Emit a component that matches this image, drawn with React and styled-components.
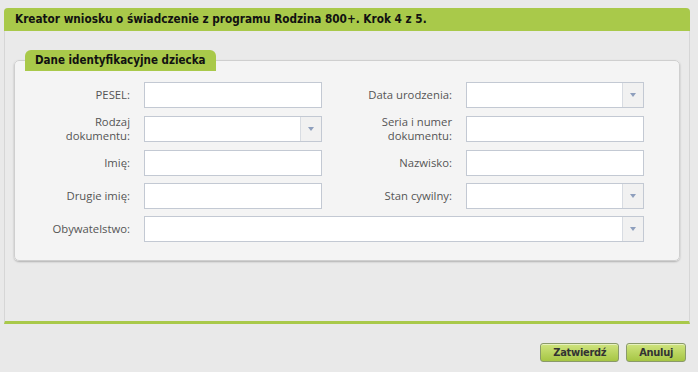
import styled, { createGlobalStyle } from "styled-components";

const Global = createGlobalStyle`
  html, body { margin: 0; padding: 0; background: #e9e9e9; }
  body { font-family: "DejaVu Sans", Verdana, sans-serif; }
`;

const Page = styled.div`
  padding: 8px 8px 0 4px;
  width: 686px;
`;

const Panel = styled.section`
  background: #eaeaea;
  border: 1px solid #d6d6d6;
  border-top: none;
  border-bottom: 3px solid #a9c94a;
  border-radius: 4px 4px 0 0;
  height: 316px;
  box-sizing: border-box;
`;

const PanelHeader = styled.h1`
  margin: 0 -1px;
  height: 23px;
  line-height: 23px;
  background: #a9c94a;
  border-radius: 4px 4px 0 0;
  padding-left: 11px;
  font-family: "DejaVu Sans Condensed", "DejaVu Sans", sans-serif;
  font-size: 11.7px;
  font-weight: bold;
  color: #111;
`;

const Fieldset = styled.fieldset`
  margin: 19px 9px 0 9px;
  padding: 11px 0 18px 0;
  background: #f4f4f4;
  border: 1px solid #cfcfcf;
  border-radius: 5px;
  box-shadow: 0 1px 2px rgba(0, 0, 0, 0.25);
  min-width: 0;
`;

const Legend = styled.legend`
  margin-left: 10px;
  padding: 0 10px;
  height: 21px;
  line-height: 21px;
  background: #a9c94a;
  border-radius: 6px 6px 0 0;
  font-family: "DejaVu Sans Condensed", "DejaVu Sans", sans-serif;
  font-size: 11.5px;
  font-weight: bold;
  color: #111;
`;

const Grid = styled.div`
  display: grid;
  grid-template-columns: 110px 178px 116px 178px;
  column-gap: 14px;
  row-gap: 7px;
  padding-left: 5px;
  align-items: center;
`;

const Label = styled.label`
  text-align: right;
  font-family: "Open Sans", sans-serif;
  font-size: 11.3px;
  line-height: 14px;
  color: #555;
`;

const Input = styled.div`
  height: 26px;
  box-sizing: border-box;
  background: #fff;
  border: 1px solid #c3c9d3;
  display: flex;
  justify-content: flex-end;
  grid-column: ${(p) => (p.$wide ? "2 / span 3" : "auto")};
  width: ${(p) => (p.$wide ? "500px" : "auto")};
`;

const Trigger = styled.div`
  width: 20px;
  background: #f1f1f1;
  border-left: 1px solid #d8dce2;
  display: flex;
  align-items: center;
  justify-content: center;
  &::after {
    content: "";
    border-left: 3.5px solid transparent;
    border-right: 3.5px solid transparent;
    border-top: 4px solid #8e9fbd;
  }
`;

const Actions = styled.div`
  display: flex;
  justify-content: flex-end;
  gap: 7px;
  padding: 19px 4px 0 0;
`;

const Button = styled.button`
  height: 19px;
  padding: 0 ${(p) => p.$pad}px;
  border: 1px solid #8a9a6a;
  border-radius: 3px;
  background: linear-gradient(#cfe47e, #a6c644);
  font-family: "Liberation Sans Narrow", "DejaVu Sans Condensed", sans-serif;
  font-weight: bold;
  font-size: 11px;
  letter-spacing: -0.3px;
  color: #333;
  box-shadow: inset 0 1px 0 rgba(255, 255, 255, 0.5);
`;

const Field = ({ label, select, wide }) => (
  <>
    <Label>{label}</Label>
    <Input $wide={wide}>{select && <Trigger />}</Input>
  </>
);

export default function App() {
  return (
    <Page>
      <Global />
      <Panel>
        <PanelHeader>
          Kreator wniosku o świadczenie z programu Rodzina 800+. Krok 4 z 5.
        </PanelHeader>
        <Fieldset>
          <Legend>Dane identyfikacyjne dziecka</Legend>
          <Grid>
            <Field label="PESEL:" />
            <Field label="Data urodzenia:" select />
            <Field
              label={
                <>
                  Rodzaj
                  <br />
                  dokumentu:
                </>
              }
              select
            />
            <Field
              label={
                <>
                  Seria i numer
                  <br />
                  dokumentu:
                </>
              }
            />
            <Field label="Imię:" />
            <Field label="Nazwisko:" />
            <Field label="Drugie imię:" />
            <Field label="Stan cywilny:" select />
            <Field label="Obywatelstwo:" select wide />
          </Grid>
        </Fieldset>
      </Panel>
      <Actions>
        <Button $pad={12}>Zatwierdź</Button>
        <Button $pad={12}>Anuluj</Button>
      </Actions>
    </Page>
  );
}
